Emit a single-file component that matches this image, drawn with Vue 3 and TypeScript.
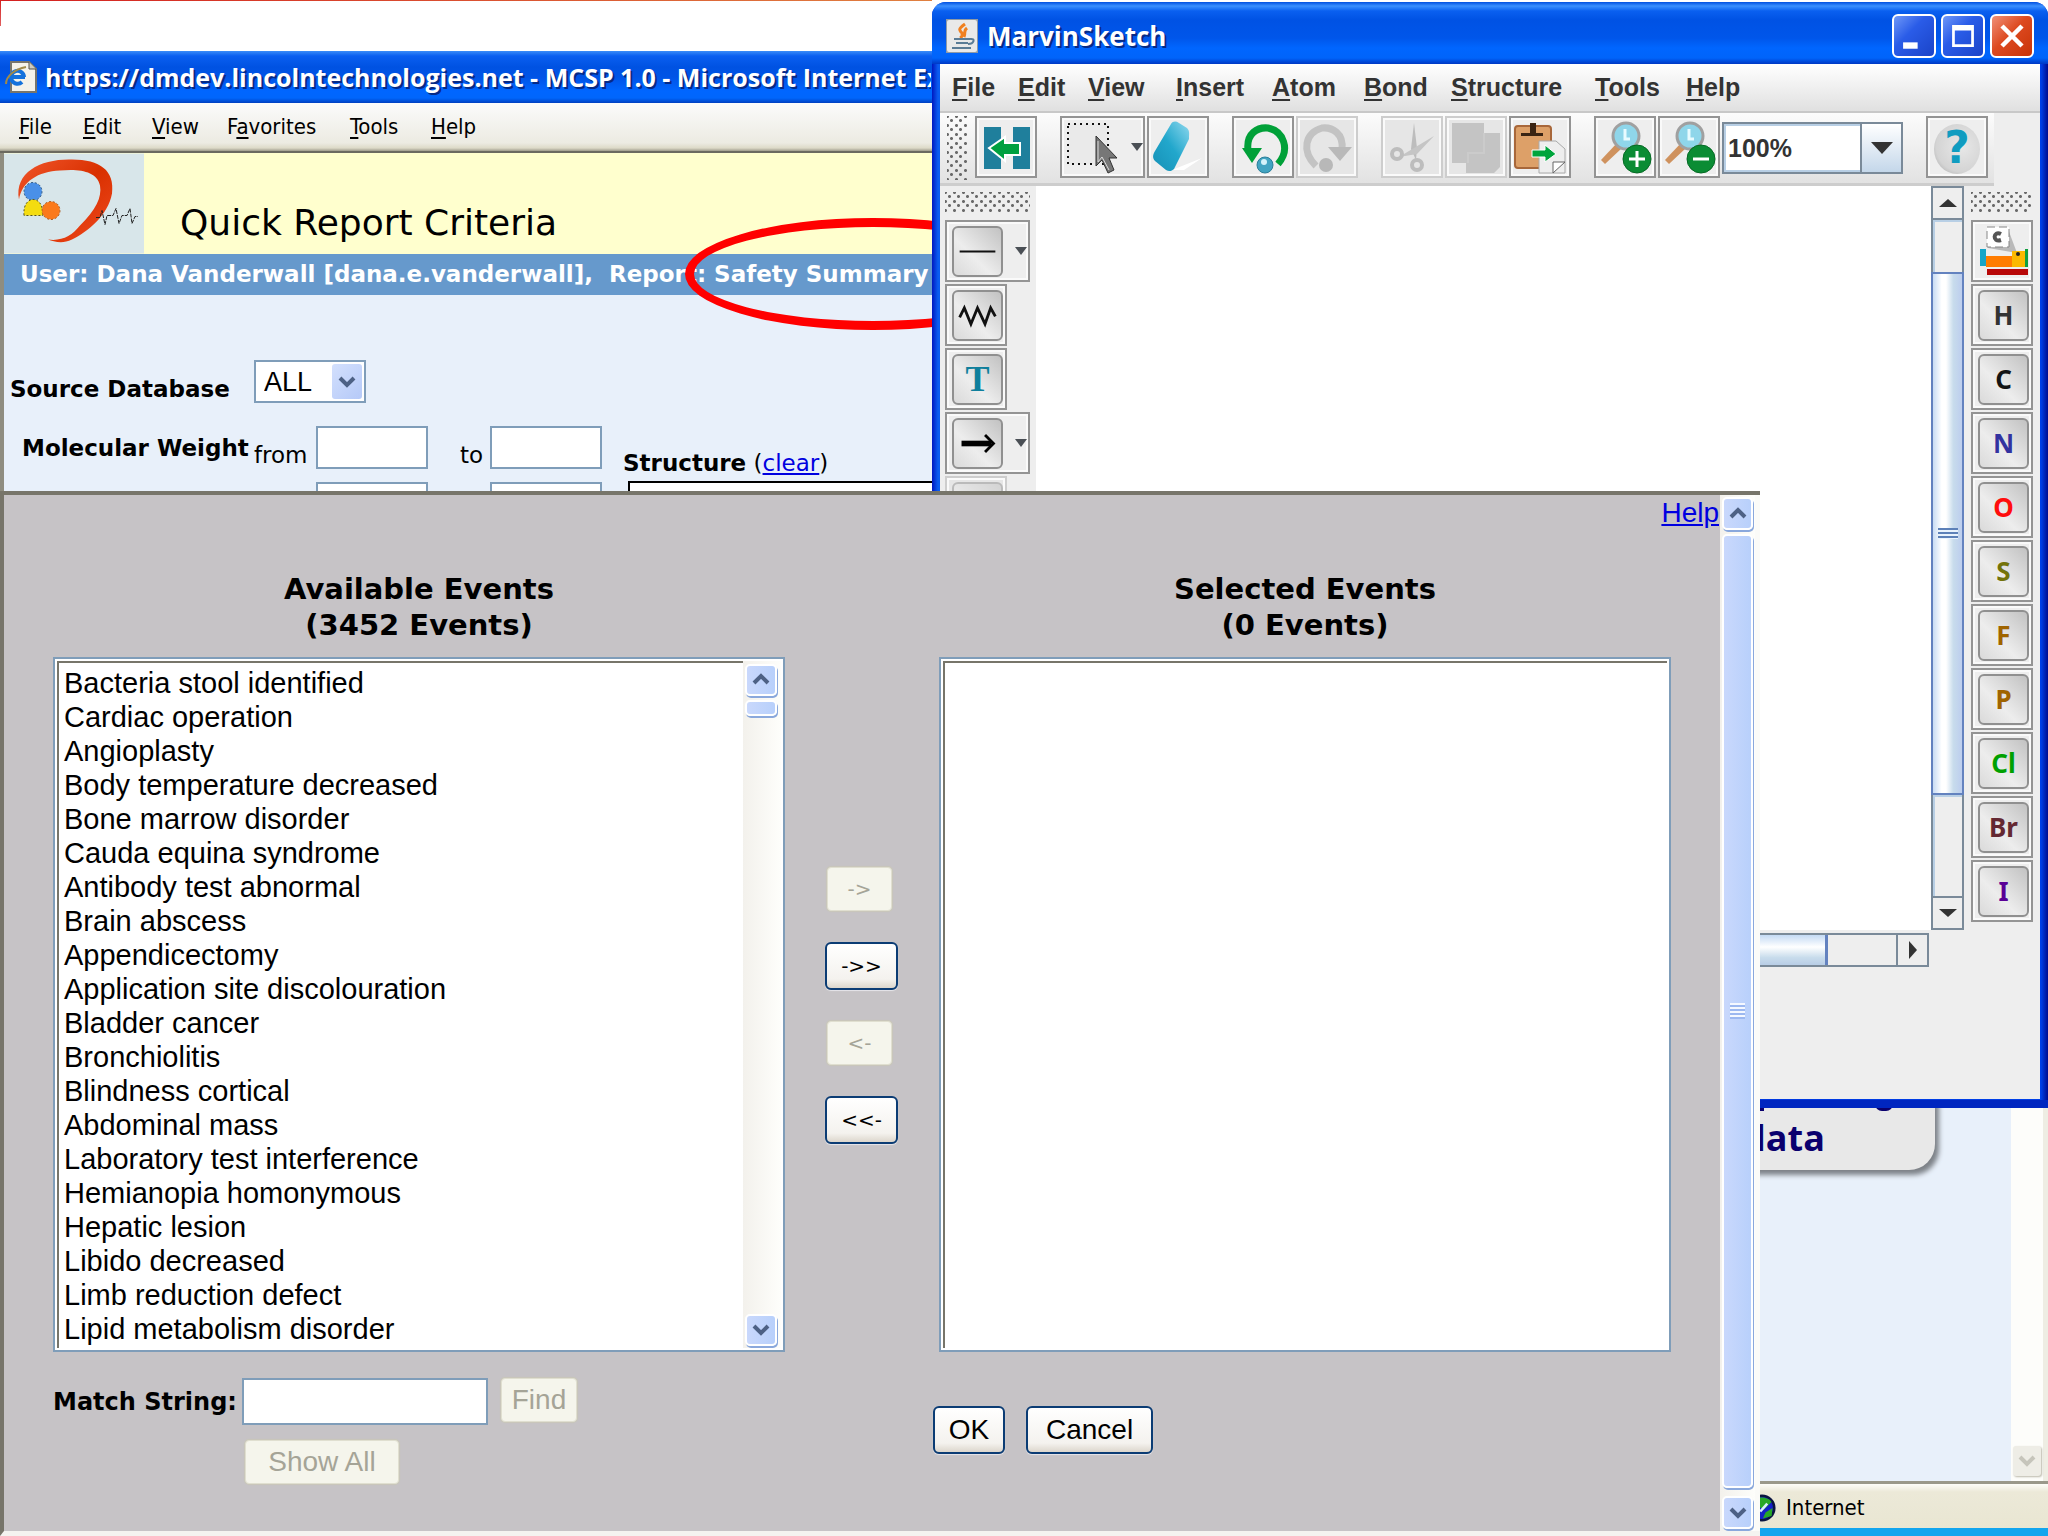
<script setup lang="ts">
import { ref } from 'vue'

interface MenuEntry {
  before?: string
  key: string
  rest: string
}

interface Element {
  symbol: string
  color: string
}

const browserMenu: MenuEntry[] = [
  { key: 'F', rest: 'ile' },
  { key: 'E', rest: 'dit' },
  { key: 'V', rest: 'iew' },
  { before: 'F', key: 'a', rest: 'vorites' },
  { key: 'T', rest: 'ools' },
  { key: 'H', rest: 'elp' },
]

const sketchMenu: MenuEntry[] = [
  { key: 'F', rest: 'ile' },
  { key: 'E', rest: 'dit' },
  { key: 'V', rest: 'iew' },
  { key: 'I', rest: 'nsert' },
  { key: 'A', rest: 'tom' },
  { key: 'B', rest: 'ond' },
  { key: 'S', rest: 'tructure' },
  { key: 'T', rest: 'ools' },
  { key: 'H', rest: 'elp' },
]

const elements: Element[] = [
  { symbol: 'H', color: '#333333' },
  { symbol: 'C', color: '#141414' },
  { symbol: 'N', color: '#3232a0' },
  { symbol: 'O', color: '#ff0d0d' },
  { symbol: 'S', color: '#73730a' },
  { symbol: 'F', color: '#a06400' },
  { symbol: 'P', color: '#a06400' },
  { symbol: 'Cl', color: '#00a000' },
  { symbol: 'Br', color: '#642832' },
  { symbol: 'I', color: '#5a0096' },
]

const available: string[] = [
  'Bacteria stool identified',
  'Cardiac operation',
  'Angioplasty',
  'Body temperature decreased',
  'Bone marrow disorder',
  'Cauda equina syndrome',
  'Antibody test abnormal',
  'Brain abscess',
  'Appendicectomy',
  'Application site discolouration',
  'Bladder cancer',
  'Bronchiolitis',
  'Blindness cortical',
  'Abdominal mass',
  'Laboratory test interference',
  'Hemianopia homonymous',
  'Hepatic lesion',
  'Libido decreased',
  'Limb reduction defect',
  'Lipid metabolism disorder',
]

const matchString = ref('')
const zoomLevel = ref('100%')
</script>

<template>
  <div class="desktop">
    <section class="browser" aria-label="Internet Explorer">
      <header class="browser-title">
        <svg class="page-icon" viewBox="0 0 32 32" aria-hidden="true">
          <path d="M6 1H24L31 8V31H6Z" fill="#f4f2ea" stroke="#77756c" stroke-width="2" />
          <path d="M24 1V8H31" fill="#cfccc0" stroke="#55534c" />
          <path d="M19 16A6.500 6.500 0 1 0 17 21M7 16H20" fill="none" stroke="#1472dc" stroke-width="4" />
          <path d="M1 23C1 15 10 8 21 6" fill="none" stroke="#a08a4a" stroke-width="2" />
        </svg>
        <span>https://dmdev.lincolntechnologies.net - MCSP 1.0 - Microsoft Internet Ex</span>
      </header>
      <nav class="browser-menu">
        <button v-for="m in browserMenu" :key="m.key + m.rest" type="button">{{ m.before }}<u>{{ m.key }}</u>{{ m.rest }}</button>
      </nav>
      <div class="browser-body">
        <main class="page">
          <div class="banner">
            <svg class="logo" viewBox="0 0 140 100" role="img" aria-label="MCSP logo">
              <defs>
                <linearGradient id="ribbon" x1="0" y1="0" x2="1" y2="1">
                  <stop offset="0" stop-color="#f0562c" />
                  <stop offset="0.500" stop-color="#d93000" />
                  <stop offset="1" stop-color="#f04a20" />
                </linearGradient>
              </defs>
              <rect width="140" height="100" fill="#d8e6ea" />
              <path d="M15 46C10 18 38 5 68 6C96 6 111 17 108 40C104 62 84 78 68 86C58 91 50 88 44 86C58 88 68 82 76 72C92 56 98 44 96 32C93 18 76 15 56 17C34 18 18 28 15 46Z" fill="url(#ribbon)" />
              <circle cx="29" cy="38" r="9" fill="#4a90e8" stroke="#26507c" stroke-dasharray="2 2" />
              <path d="M20 62C19 50 25 46 29 46C34 46 39 50 39 62Z" fill="#f4dc10" stroke="#57531c" stroke-dasharray="2 2" />
              <circle cx="47" cy="57" r="9" fill="#fb7a1c" stroke="#a8561c" stroke-dasharray="2 2" />
              <path d="M92 64H96L98 57L101 71L103 62H109L112 55L115 70L118 62H123L126 55L128 70L131 63H134" fill="none" stroke="#222" stroke-width="1" stroke-dasharray="4 1" />
            </svg>
            <h1>Quick Report Criteria</h1>
          </div>
          <div class="user-bar">User: Dana Vanderwall [dana.e.vanderwall],&nbsp; Report: Safety Summary</div>
          <form class="criteria" @submit.prevent>
            <div class="fields">
              <div class="source-row">
                <label for="source">Source Database</label>
                <span class="combo">
                  <select id="source"><option>ALL</option></select>
                  <span class="arrow-tile"><svg viewBox="0 0 20 14"><path d="M3 3L10 10L17 3" /></svg></span>
                </span>
              </div>
              <div class="range-row">
                <label for="mw-from" class="name">Molecular Weight</label>
                <span>from</span>
                <input id="mw-from" type="text">
                <label for="mw-to" class="to">to</label>
                <input id="mw-to" type="text">
              </div>
              <div class="range-row">
                <input class="second-from" type="text" aria-label="Range from">
                <input class="second-to" type="text" aria-label="Range to">
              </div>
            </div>
            <div class="structure">
              <p><b>Structure</b> (<a href="#clear">clear</a>)</p>
              <div class="structure-box"></div>
            </div>
          </form>
          <div class="callout"><i class="tail-p"></i><i class="tail-g"></i><span>data</span></div>
        </main>
        <div class="page-scroll">
          <button type="button" aria-label="Scroll down"><svg viewBox="0 0 20 14"><path d="M3 3L10 10L17 3" /></svg></button>
        </div>
      </div>
      <footer class="status">
        <svg class="globe" viewBox="0 0 32 32" aria-hidden="true">
          <circle cx="16" cy="16" r="14" fill="#1420c8" stroke="#0a1440" stroke-width="3" />
          <path d="M8 6C14 2 24 4 27 9L18 18L12 14ZM28 16L27 25L17 28L20 21Z" fill="#28a828" />
          <path d="M14 20L22 11" stroke="#d8f0ff" stroke-width="3" />
        </svg>
        <span>Internet</span>
      </footer>
    </section>

    <div class="ring"></div>

    <section class="sketch" aria-label="MarvinSketch">
      <header class="sketch-title">
        <svg class="java" viewBox="0 0 32 34" aria-hidden="true">
          <rect x="0" y="0" width="32" height="34" rx="3" fill="#e9e9e9" stroke="#8f9aa6" stroke-width="2" />
          <path d="M19 5C12 10 13 11 16 14C17 17 16 18 14 19M21 9C17 12 20 14 18 18" fill="none" stroke="#f08020" stroke-width="3" />
          <path d="M8 20H24M10 24H22M6 29H25M24 20C30 19 28 25 22 25" fill="none" stroke="#5a7c96" stroke-width="2" />
        </svg>
        <h2>MarvinSketch</h2>
        <button class="win" type="button" aria-label="Minimize"><svg viewBox="0 0 44 44"><rect x="10" y="29" width="16" height="7" fill="#fff" /></svg></button>
        <button class="win" type="button" aria-label="Maximize"><svg viewBox="0 0 44 44"><path d="M10 10H34V34H10ZM13 16V31H31V16Z" fill="#fff" fill-rule="evenodd" /></svg></button>
        <button class="win close" type="button" aria-label="Close"><svg viewBox="0 0 44 44"><path d="M11 11L33 33M33 11L11 33" stroke="#fff" stroke-width="5" /></svg></button>
      </header>
      <div class="sketch-inner">
        <nav class="sketch-menu">
          <button v-for="m in sketchMenu" :key="m.key + m.rest" type="button"><u>{{ m.key }}</u>{{ m.rest }}</button>
        </nav>
        <div class="toolbar">
          <span class="grip grip-v"></span>
          <div class="group">
            <button class="tool" type="button" aria-label="Hide panel">
              <svg viewBox="0 0 56 56">
                <rect x="6" y="8" width="17" height="42" fill="#1f7f9c" />
                <rect x="35" y="8" width="17" height="42" fill="#1f7f9c" />
                <path d="M11 29L27 18V24H42V36H27V42Z" fill="#00a040" stroke="#fff" stroke-width="2" />
              </svg>
            </button>
          </div>
          <div class="group">
            <button class="tool wide" type="button" aria-label="Select">
              <svg viewBox="0 0 56 56">
                <rect x="5" y="5" width="40" height="40" fill="#eaeaea" stroke="#111" stroke-width="2" stroke-dasharray="2 4" />
                <path d="M33 17V47L39 41L45 54L51 51L46 39H54Z" fill="#777" stroke="#333" stroke-width="1" />
                <path d="M35 22V43L39 38L46 51" fill="none" stroke="#ddd" stroke-width="1" />
              </svg>
              <svg class="caret" viewBox="0 0 12 8"><path d="M0 0H12L6 8Z" /></svg>
            </button>
            <button class="tool" type="button" aria-label="Erase">
              <svg viewBox="0 0 56 56">
                <defs>
                  <linearGradient id="rubber" x1="1" y1="0" x2="0" y2="1">
                    <stop offset="0" stop-color="#8fd8ee" />
                    <stop offset="0.500" stop-color="#22a7cc" />
                    <stop offset="1" stop-color="#1690b6" />
                  </linearGradient>
                </defs>
                <path d="M22 51L52 39L34 51Z" fill="#fff" />
                <path d="M21 5C23 2 26 2 29 4L37 9C40 12 39 15 39 20L24 50C22 52 19 53 16 51L5 42C2 39 3 35 5 32Z" fill="url(#rubber)" />
              </svg>
            </button>
          </div>
          <div class="group">
            <button class="tool" type="button" aria-label="Undo">
              <svg viewBox="0 0 56 56">
                <path d="M13 31C11 14 23 8 33 9C48 12 56 30 43 45" fill="none" stroke="#00a038" stroke-width="7" />
                <path d="M7 29H27L17 44Z" fill="#00a038" />
                <circle cx="30" cy="46" r="8" fill="#42a4c2" stroke="#2b7f9a" />
                <circle cx="29" cy="43" r="3" fill="#d4f2fa" />
              </svg>
            </button>
            <button class="tool off" type="button" aria-label="Redo" disabled>
              <svg viewBox="0 0 56 56">
                <path d="M43 31C45 14 33 8 23 9C6 14 2 32 17 47" fill="none" stroke="#c3c3c3" stroke-width="7" />
                <path d="M29 28H53L41 42Z" fill="#b9b9b9" />
                <circle cx="27" cy="46" r="7" fill="#b8b8b8" />
              </svg>
            </button>
          </div>
          <div class="group">
            <button class="tool off" type="button" aria-label="Cut" disabled>
              <svg viewBox="0 0 56 56">
                <path d="M30 4L33 29L32 41L27 30Z" fill="#bdbdbd" />
                <path d="M50 17L33 35L15 38L30 29Z" fill="#c5c5c5" />
                <circle cx="13" cy="35" r="5" fill="none" stroke="#bdbdbd" stroke-width="4" />
                <circle cx="33" cy="46" r="5" fill="none" stroke="#bdbdbd" stroke-width="4" />
              </svg>
            </button>
            <button class="tool off" type="button" aria-label="Copy" disabled>
              <svg viewBox="0 0 56 56">
                <path d="M4 4H36V14H52V48L46 54H18V44H4Z" fill="#c4c4c4" />
                <path d="M36 14V34H20V44" fill="none" stroke="#cbcbcb" stroke-width="2" />
              </svg>
            </button>
            <button class="tool" type="button" aria-label="Paste">
              <svg viewBox="0 0 56 56">
                <rect x="3" y="7" width="36" height="42" rx="3" fill="#dda068" stroke="#a8673a" stroke-width="2" />
                <path d="M9 17H31V14H24V4H18V14H9Z" fill="#3a2413" />
                <path d="M27 22H44L53 30V54H27Z" fill="#eeeeee" stroke="#aaa" />
                <path d="M41 54V43H53Z" fill="#fff" stroke="#666" />
                <path d="M20 31H33V26L44 35L33 43V38H20Z" fill="#00a53c" stroke="#fff" stroke-width="1" />
              </svg>
            </button>
          </div>
          <div class="group">
            <button v-for="kind in ['in', 'out']" :key="kind" class="tool" type="button" :aria-label="'Zoom ' + kind">
              <svg viewBox="0 0 56 56">
                <path d="M4 41L20 24L25 29L8 45Z" fill="#cf925e" />
                <circle cx="29" cy="17" r="13" fill="#8fd6ea" stroke="#a0a0a0" stroke-width="3" />
                <path d="M28 10V20H33" fill="none" stroke="#e8fbff" stroke-width="3" />
                <circle cx="40" cy="40" r="14" fill="#0b8c34" stroke="#056a24" />
                <path :d="kind === 'in' ? 'M32 40H48M40 32V48' : 'M32 40H48'" stroke="#fff" stroke-width="3" />
              </svg>
            </button>
            <span class="zoom-combo">
              <select v-model="zoomLevel" aria-label="Zoom level"><option>100%</option></select>
              <span class="zoom-arrow"><svg viewBox="0 0 22 12"><path d="M0 0H22L11 12Z" /></svg></span>
            </span>
          </div>
          <div class="group">
            <button class="tool" type="button" aria-label="Help"><span class="help-ball">?</span></button>
          </div>
        </div>
        <div class="work">
          <div class="draw-tools">
            <span class="grip grip-h"></span>
            <button class="tool wide" type="button" aria-label="Single bond">
              <span class="key"><svg viewBox="0 0 50 50"><path d="M6 25H44" stroke="#111" stroke-width="2" /></svg></span>
              <svg class="caret" viewBox="0 0 12 8"><path d="M0 0H12L6 8Z" /></svg>
            </button>
            <button class="tool" type="button" aria-label="Chain">
              <span class="key"><svg viewBox="0 0 50 50"><path d="M6 27L11 17L18 34L25 17L33 34L39 17L44 26" fill="none" stroke="#111" stroke-width="3" /></svg></span>
            </button>
            <button class="tool" type="button" aria-label="Text"><span class="key letter-t">T</span></button>
            <button class="tool wide" type="button" aria-label="Reaction arrow">
              <span class="key"><svg viewBox="0 0 50 50"><path d="M8 25H40" stroke="#000" stroke-width="6" /><path d="M33 16L42 25L33 34" fill="none" stroke="#000" stroke-width="3" /></svg></span>
              <svg class="caret" viewBox="0 0 12 8"><path d="M0 0H12L6 8Z" /></svg>
            </button>
            <button class="tool off" type="button" aria-label="Bracket" disabled><span class="key"></span></button>
          </div>
          <div class="canvas-area">
            <div class="canvas-row">
              <div class="canvas"></div>
              <div class="vbar">
                <button type="button" aria-label="Scroll up"><svg viewBox="0 0 18 8"><path d="M0 8H18L9 0Z" /></svg></button>
                <span class="vtrack-top"></span>
                <span class="vthumb"><i></i></span>
                <span class="vtrack"></span>
                <button type="button" aria-label="Scroll down"><svg viewBox="0 0 18 8"><path d="M0 0H18L9 8Z" /></svg></button>
              </div>
            </div>
            <div class="hbar">
              <span class="hthumb"></span>
              <span class="htrack"></span>
              <button type="button" aria-label="Scroll right"><svg viewBox="0 0 8 18"><path d="M0 0V18L8 9Z" /></svg></button>
            </div>
          </div>
          <div class="palette">
            <span class="grip grip-h"></span>
            <button class="tool" type="button" aria-label="Periodic table">
              <svg viewBox="0 0 56 56">
                <path d="M14 6H34L43 30L14 25Z" fill="#b9b9b9" />
                <rect x="13" y="4" width="22" height="20" fill="#fff" stroke="#888" stroke-dasharray="8 4" />
                <path d="M27 11C19 7 18 20 27 17" fill="none" stroke="#555" stroke-width="4" />
                <rect x="6" y="26" width="6" height="17" fill="#16a5c8" />
                <rect x="12" y="33" width="26" height="11" fill="#ff7c00" />
                <rect x="38" y="28" width="14" height="16" fill="#fbb800" />
                <rect x="51" y="26" width="3" height="18" fill="#10a040" />
                <rect x="13" y="46" width="41" height="6" fill="#b80808" />
                <circle cx="44" cy="31" r="2" fill="#222" />
              </svg>
            </button>
            <button v-for="e in elements" :key="e.symbol" class="tool" type="button">
              <span class="key" :style="{ color: e.color }">{{ e.symbol }}</span>
            </button>
          </div>
        </div>
      </div>
    </section>

    <section class="dialog" aria-label="Event selection">
      <div class="dialog-main">
        <div class="help-row"><a href="#help">Help</a></div>
        <div class="columns">
          <div class="column">
            <h3><label for="available">Available Events<br>(3452 Events)</label></h3>
            <div class="list">
              <select id="available" multiple size="20">
                <option v-for="name in available" :key="name">{{ name }}</option>
              </select>
              <div class="xp-bar list-bar">
                <button type="button" aria-label="Scroll up"><svg viewBox="0 0 20 14"><path d="M3 10L10 3L17 10" /></svg></button>
                <span class="list-thumb"></span>
                <button class="last" type="button" aria-label="Scroll down"><svg viewBox="0 0 20 14"><path d="M3 3L10 10L17 3" /></svg></button>
              </div>
            </div>
            <div class="match">
              <label for="match">Match String:</label>
              <input id="match" v-model="matchString" type="text">
              <button class="xp-btn find" type="button" disabled>Find</button>
            </div>
            <button class="xp-btn show-all" type="button" disabled>Show All</button>
          </div>
          <div class="movers">
            <button class="xp-btn" type="button" disabled>-&gt;</button>
            <button class="xp-btn" type="button">-&gt;&gt;</button>
            <button class="xp-btn" type="button" disabled>&lt;-</button>
            <button class="xp-btn" type="button">&lt;&lt;-</button>
          </div>
          <div class="column selected">
            <h3><label for="selected">Selected Events<br>(0 Events)</label></h3>
            <div class="list"><select id="selected" multiple size="20"></select></div>
            <div class="actions">
              <button class="xp-btn" type="button">OK</button>
              <button class="xp-btn" type="button">Cancel</button>
            </div>
          </div>
        </div>
      </div>
      <div class="xp-bar dialog-bar">
        <button type="button" aria-label="Scroll up"><svg viewBox="0 0 20 14"><path d="M3 10L10 3L17 10" /></svg></button>
        <span class="dialog-thumb"><i></i></span>
        <button type="button" aria-label="Scroll down"><svg viewBox="0 0 20 14"><path d="M3 3L10 10L17 3" /></svg></button>
      </div>
    </section>
  </div>
</template>

<style>
body {
  background: #fff;
}
</style>

<style scoped>
* {
  box-sizing: border-box;
}

button,
input,
select {
  margin: 0;
  padding: 0;
  border: 0;
  font: inherit;
  color: inherit;
  background: none;
  border-radius: 0;
  outline: 0;
}

svg {
  display: block;
}

h1,
h2,
h3,
p {
  margin: 0;
}

.desktop {
  position: relative;
  min-height: 100vh;
  padding-top: 51px;
  overflow: hidden;
  display: flex;
  flex-direction: column;
  font-family: "Liberation Sans", Arial, sans-serif;
  color: #000;
  background:
    linear-gradient(90deg, #d42020, #e08040) 0 0 / 932px 1px no-repeat,
    linear-gradient(#d42020, #e06060) 0 0 / 1px 26px no-repeat,
    #fff;
}

/* Browser window */
.browser {
  flex: 1;
  display: flex;
  flex-direction: column;
}

.browser-title {
  height: 52px;
  display: flex;
  align-items: center;
  gap: 8px;
  padding-left: 5px;
  background: linear-gradient(#3a8cf8 0, #0a5ff0 5px, #0052e2 16px, #0054e6 26px, #0066ff 40px, #0066fc 47px, #0040c0 52px);
  color: #fff;
  font: 700 25px/52px "Open Sans", sans-serif;
  text-shadow: 2px 2px 0 #062a86;
  white-space: nowrap;
}

.browser-title span {
  width: 886px;
  overflow: hidden;
}

.page-icon {
  flex: none;
  width: 32px;
  height: 32px;
}

.browser-menu {
  height: 50px;
  display: grid;
  grid-template-columns: 64px 69px 75px 123px 81px auto;
  justify-content: start;
  padding-left: 19px;
  background: linear-gradient(#fbfbfb, #ecebe2 40px, #dddac8 45px, #8a8878 49px);
  border-bottom: 2px solid #6b6a60;
  font: 22px/48px "DejaVu Sans Condensed", "DejaVu Sans", sans-serif;
}

.browser-menu button {
  text-align: left;
}

u {
  text-underline-offset: 3px;
  text-decoration-thickness: 2px;
}

.browser-body {
  flex: 1;
  display: flex;
  border-left: 4px solid #8f8d80;
}

.page {
  flex: 1;
  position: relative;
  background: #e8f0fa;
}

.banner {
  display: flex;
  background: #ffffce;
}

.logo {
  width: 140px;
  height: 101px;
}

.banner h1 {
  padding: 44px 0 0 36px;
  font: 36px/52px "DejaVu Sans", Verdana, sans-serif;
}

.user-bar {
  height: 41px;
  padding-left: 16px;
  background: #6699cc;
  color: #fff;
  font: 700 23px/40px "DejaVu Sans", Verdana, sans-serif;
  white-space: nowrap;
}

.criteria {
  display: flex;
  font: 23px/28px "DejaVu Sans", Verdana, sans-serif;
}

.fields {
  width: 600px;
  padding-top: 65px;
}

.fields label:first-child,
.structure b {
  font-weight: 700;
}

.source-row {
  display: flex;
  align-items: flex-end;
  height: 43px;
  padding-left: 6px;
  margin-bottom: 23px;
}

.source-row label {
  width: 244px;
}

.combo {
  display: grid;
  width: 112px;
  height: 43px;
  border: 2px solid #7f9db9;
  background: #fff;
}

.combo > * {
  grid-area: 1 / 1;
}

.combo select,
.zoom-combo select {
  appearance: none;
  padding-left: 8px;
}

.combo select {
  font: 27px/36px "Liberation Sans", Arial, sans-serif;
}

.arrow-tile {
  justify-self: end;
  display: grid;
  place-items: center;
  width: 30px;
  margin: 2px;
  border-radius: 3px;
  background: linear-gradient(135deg, #d3e0fd, #b5c9f8);
  pointer-events: none;
}

.arrow-tile svg,
.xp-bar button svg,
.page-scroll svg {
  width: 20px;
  height: 14px;
  fill: none;
  stroke: #4d6185;
  stroke-width: 4;
}

.range-row {
  display: grid;
  grid-template-columns: 250px 62px 144px 30px 112px;
  align-items: end;
  height: 43px;
  margin-bottom: 13px;
}

.range-row .name {
  align-self: center;
  padding-left: 18px;
  white-space: nowrap;
}

.range-row input {
  width: 112px;
  height: 43px;
  background: #fff;
  border: 2px solid #7f9db9;
}

.second-from {
  grid-column: 3;
}

.second-to {
  grid-column: 5;
}

.structure {
  flex: 1;
  padding: 154px 0 0 19px;
}

.structure p {
  height: 32px;
}

.structure a {
  color: #0000e0;
}

.structure-box {
  height: 120px;
  margin-left: 5px;
  background: #fff;
  border: 2px solid #000;
}

.callout {
  position: absolute;
  right: 76px;
  bottom: 311px;
  width: 320px;
  height: 90px;
  padding: 38px 0 0 128px;
  border-radius: 0 0 26px 26px;
  background: #e8e8e8;
  box-shadow: 4px 5px 5px #7d8288;
  color: #0a006e;
  font: 700 36px/40px "Open Sans", "Noto Sans", sans-serif;
}

.tail-p,
.tail-g {
  position: absolute;
  top: 24px;
  height: 7px;
  background: #0a006e;
}

.tail-p {
  left: 142px;
  width: 7px;
}

.tail-g {
  left: 260px;
  width: 18px;
  border-radius: 0 0 9px 9px;
}

.page-scroll {
  width: 37px;
  padding: 2px 2px 5px;
  display: flex;
  align-items: flex-end;
  background: #fdfdfa;
  border-right: 5px solid #eeede3;
}

.page-scroll button {
  display: grid;
  place-items: center;
  width: 29px;
  height: 30px;
  border-radius: 3px;
  background: #eeede6;
  box-shadow: 1px 1px 2px #bbb9ab;
}

.page-scroll svg {
  stroke: #c6c5bb;
}

.status {
  display: flex;
  align-items: center;
  gap: 8px;
  height: 55px;
  padding: 4px 0 0 1746px;
  border-top: 3px solid #9a988a;
  border-bottom: 8px solid #12a5ee;
  background: linear-gradient(#fdfdf8, #ece9d8 8px, #e9e6d2);
  font: 22px/40px "DejaVu Sans Condensed", "DejaVu Sans", sans-serif;
}

.globe {
  width: 32px;
  height: 28px;
}

.ring {
  position: absolute;
  left: 685px;
  top: 218px;
  width: 376px;
  height: 112px;
  border: 9px solid #f00;
  border-radius: 50%;
}

/* Sketcher window */
.sketch {
  position: absolute;
  left: 932px;
  right: 0;
  top: 2px;
  height: 1106px;
  display: flex;
  flex-direction: column;
  border-radius: 14px 14px 0 0;
  background: linear-gradient(90deg, #0018c0 0, #0a5cf0 6px, #0030d8 50%, #0040e8 calc(100% - 7px), #000c90 100%);
  padding: 0 8px 9px;
  box-shadow: inset 0 -8px 0 #0026c0;
}

.sketch-title {
  display: flex;
  align-items: center;
  gap: 3px;
  height: 62px;
  margin: 0 -8px;
  padding: 6px 14px 0 14px;
  border-radius: 14px 14px 0 0;
  background: linear-gradient(#0050e0 0, #3a90ff 4px, #0a60f0 9px, #0052e4 18px, #0056ea 36px, #0066ff 46px, #0064fa 56px, #0038c4 62px);
  color: #fff;
}

.java {
  width: 32px;
  height: 34px;
}

.sketch-title h2 {
  flex: 1;
  padding-left: 6px;
  font: 700 26px/40px "Open Sans", sans-serif;
  text-shadow: 2px 2px 0 #062a86;
}

.win {
  width: 44px;
  height: 44px;
  margin-left: 2px;
  border: 2px solid #fff;
  border-radius: 6px;
  background: linear-gradient(135deg, #6f98f8, #2a5ce8 40%, #1a44c8);
}

.win.close {
  background: linear-gradient(135deg, #f09078, #dd4a20 45%, #c83408);
}

.win svg {
  width: 40px;
  height: 40px;
}

.sketch-inner {
  flex: 1;
  display: flex;
  flex-direction: column;
  background: #eee;
  color: #333;
}

.sketch-menu {
  display: grid;
  grid-template-columns: 66px 70px 88px 96px 92px 87px 144px 91px auto;
  justify-content: start;
  height: 49px;
  padding: 0 0 2px 12px;
  border-bottom: 2px solid #c8c8c8;
  background: linear-gradient(#fff, #e0e0e0);
  font: 700 25px/46px "Liberation Sans", Arial, sans-serif;
}

.sketch-menu button {
  text-align: left;
}

.toolbar {
  display: flex;
  gap: 23px;
  align-self: flex-start;
  height: 73px;
  padding: 3px 6px 6px 7px;
  border-bottom: 3px solid #cdcdcd;
  background: linear-gradient(#fcfcfc, #e2e2e2);
}

.toolbar .grip + .group {
  margin-left: -16px;
}

.group {
  display: flex;
  gap: 2px;
}

.grip {
  display: block;
  background-image: radial-gradient(circle, #6a6a6a 1px, transparent 2px), radial-gradient(circle, #6a6a6a 1px, transparent 2px);
  background-size: 9px 9px;
  background-position: 0 0, 5px 5px;
}

.grip-v {
  width: 21px;
  height: 64px;
}

.grip-h {
  height: 21px;
  margin-bottom: 7px;
}

.tool {
  display: flex;
  align-items: center;
  width: 62px;
  height: 62px;
  padding: 1px;
  border: 2px solid #949494;
  background: #eee;
  box-shadow: inset 0 0 0 2px #fafafa;
}

.tool.wide {
  width: 85px;
}

.tool > svg {
  flex: none;
  width: 56px;
  height: 56px;
}

.tool.off {
  border-color: #cdcdcd;
  background: #e6e6e6;
}

.tool.off .key {
  opacity: 0.5;
}

.tool > .caret {
  width: 12px;
  height: 8px;
  margin-left: 12px;
  fill: #4a4f55;
}

.zoom-combo {
  display: flex;
  width: 181px;
  height: 52px;
  margin-top: 6px;
  border: 2px solid #7a8a99;
  background: #fff;
  box-shadow: inset 0 0 0 2px #b8cfe5;
}

.zoom-combo select {
  flex: 1;
  min-width: 0;
  padding-left: 4px;
  font: 700 25px/48px "Liberation Sans", Arial, sans-serif;
}

.zoom-arrow {
  display: grid;
  place-items: center;
  width: 41px;
  border-left: 2px solid #7a8a99;
  background: linear-gradient(#fff, #c4d7ea);
}

.zoom-arrow svg {
  width: 22px;
  height: 12px;
  fill: #333;
}

.help-ball {
  width: 46px;
  height: 50px;
  margin: 4px 0 0 5px;
  border-radius: 50%;
  background: radial-gradient(circle at 60% 45%, #e8e8e8, #d4d4d4 65%, #9a9a9a);
  color: #109cc0;
  font: 700 44px/48px "DejaVu Sans", sans-serif;
}

.work {
  display: flex;
}

.draw-tools {
  width: 96px;
  height: 744px;
  padding: 6px 6px 0 5px;
}

.draw-tools .tool,
.palette .tool {
  margin-bottom: 2px;
}

.key {
  display: grid;
  place-items: center;
  width: 51px;
  height: 51px;
  margin-left: 4px;
  border: 2px solid #909090;
  border-radius: 6px;
  background: linear-gradient(225deg, #c2c2c2, #ededed 60%, #dadada);
  font: 700 26px/47px "Noto Sans", sans-serif;
}

.key svg {
  width: 47px;
  height: 47px;
}

.key.letter-t {
  color: #0f7f9c;
  font: 700 36px/47px "Liberation Serif", serif;
}

.canvas-area {
  flex: 1;
  min-width: 0;
}

.canvas-row {
  display: flex;
  height: 744px;
}

.canvas {
  flex: 1;
  background: #fff;
}

.vbar {
  display: flex;
  flex-direction: column;
  width: 33px;
  border: 2px solid #7a8a99;
  background: #eee;
}

.vbar button,
.hbar button {
  display: grid;
  place-items: center;
  width: 29px;
  height: 30px;
}

.vbar svg {
  width: 18px;
  height: 8px;
  fill: #333;
}

.vtrack-top {
  height: 54px;
  border-top: 2px solid #7a8a99;
  box-shadow: inset 2px 2px 0 #b8cfe5;
}

.vthumb {
  display: grid;
  place-items: center;
  height: 523px;
  margin: 0 -2px;
  border: 2px solid #6382bf;
  background: linear-gradient(90deg, #c8dcf4 0, #fff 30%, #fff 45%, #c8dcec 70%, #bccdee);
}

.vthumb i {
  width: 20px;
  height: 11px;
  background: repeating-linear-gradient(#5c80b8 0 2px, #e8f2fc 2px 4px);
}

.vtrack {
  flex: 1;
  border-bottom: 2px solid #7a8a99;
  box-shadow: inset 2px 2px 0 #b8cfe5;
}

.hbar {
  display: flex;
  height: 34px;
  margin: 3px 35px 0 0;
  border: 2px solid #7a8a99;
}

.hthumb {
  flex: 1;
  border-right: 3px solid #6382bf;
  background: linear-gradient(#c4daf4 0, #fff 40%, #c8dcec 75%, #b8cde6);
}

.htrack {
  width: 70px;
  border-right: 2px solid #7a8a99;
}

.hbar svg {
  width: 8px;
  height: 18px;
  fill: #333;
}

.palette {
  width: 76px;
  padding: 6px 7px 0 7px;
}

/* Event dialog */
.dialog {
  position: absolute;
  left: 0;
  right: 288px;
  top: 491px;
  bottom: 0;
  display: flex;
  border: solid #77756a;
  border-width: 4px 0 0 4px;
  border-bottom: 5px solid #f4f3f0;
  background: #c6c3c6;
}

.dialog-main {
  flex: 1;
}

.help-row {
  height: 76px;
  padding-right: 1px;
  text-align: right;
  font-size: 28px;
  line-height: 36px;
}

.help-row a {
  color: #0000e0;
}

.columns {
  display: flex;
  padding: 0 49px;
}

.column {
  flex: 1;
}

/* The right column is wider by the indent that its list has */
.selected {
  flex: 1 1 6px;
}

.selected .list,
.selected h3 {
  margin-left: 6px;
}

h3 {
  padding-bottom: 14px;
  text-align: center;
  font: 700 29px/36px "DejaVu Sans", Verdana, sans-serif;
}

.list {
  display: flex;
  height: 695px;
  padding: 2px;
  border: 2px solid #7f9db9;
  background: #fff;
}

.list select {
  flex: 1;
  min-width: 0;
  height: 687px;
  padding-top: 4px;
  border-top: 2px solid #77756a;
  border-left: 2px solid #77756a;
  background: #fff;
  font: 29px/34px "Liberation Sans", Arial, sans-serif;
  overflow: hidden;
  scrollbar-width: none;
}

.list option {
  height: 34px;
  min-height: 0;
  padding: 0 0 0 5px;
  line-height: 34px;
}

.xp-bar {
  display: flex;
  flex-direction: column;
  background: linear-gradient(90deg, #f3f1ec, #fefefb);
}

.xp-bar button,
.list-thumb,
.dialog-thumb {
  display: grid;
  place-items: center;
  border: 2px solid #fff;
  border-radius: 5px;
  background: linear-gradient(90deg, #c9d8fc, #b8d0fb);
  box-shadow: 1px 2px 0 #8aa8dc;
}

.list-bar {
  width: 38px;
  padding: 3px 4px 2px 2px;
}

.list-bar button {
  height: 32px;
}

.list-thumb {
  height: 16px;
  margin-top: 4px;
}

.list-bar .last {
  margin-top: auto;
}

.match {
  display: flex;
  align-items: flex-start;
  margin-top: 26px;
}

.match label {
  width: 189px;
  font: 700 24px/48px "DejaVu Sans", Verdana, sans-serif;
}

.match input {
  width: 246px;
  height: 47px;
  border: 2px solid #7f9db9;
  background: #fff;
  font-size: 28px;
}

.xp-btn {
  height: 48px;
  border: 2px solid #0b3c74;
  border-radius: 6px;
  background: linear-gradient(#fff, #f4f2ee 80%, #dcd6cc);
  box-shadow: 0 1px 1px #e6e6ea;
  font-size: 28px;
  line-height: 40px;
}

.xp-btn:disabled {
  height: 44px;
  border: 1px solid #e0dfd0;
  border-radius: 4px;
  background: #f5f5ec;
  box-shadow: 0 0 1px 1px #c9c7ba;
  color: #a5a497;
}

.find {
  width: 76px;
  margin-left: 13px;
}

.show-all {
  width: 154px;
  margin: 14px 0 0 192px;
}

.movers {
  display: flex;
  flex-direction: column;
  gap: 31px;
  width: 148px;
  padding: 296px 0 0 40px;
}

.movers .xp-btn {
  width: 73px;
  font: 20px/40px "DejaVu Sans", Verdana, sans-serif;
}

.movers .xp-btn:disabled {
  width: 65px;
  margin-left: 2px;
}

.actions {
  display: flex;
  gap: 21px;
  margin-top: 54px;
}

.actions .xp-btn {
  min-width: 72px;
  padding: 0 18px;
}

.actions .xp-btn:first-child {
  padding: 0 12px;
}

.dialog-bar {
  width: 40px;
  padding: 2px;
  border-right: 5px solid #fbfbf8;
}

.dialog-bar button {
  height: 33px;
}

.dialog-thumb {
  flex: 1;
  margin: 4px 0 8px;
}

.dialog-thumb i {
  width: 15px;
  height: 16px;
  background: repeating-linear-gradient(#f4f8ff 0 2px, #9cb8f0 2px 4px);
}
</style>
